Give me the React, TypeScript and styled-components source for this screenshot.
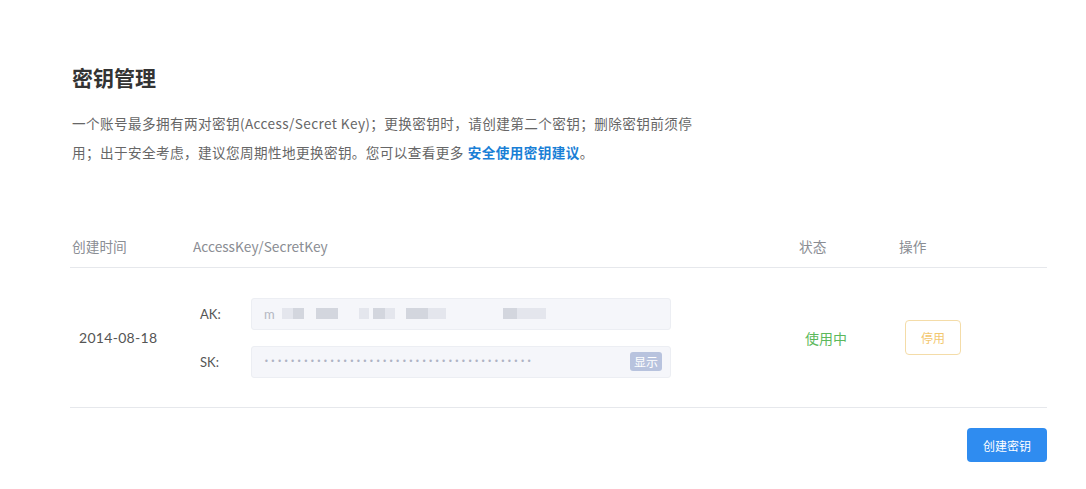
import React from "react";
import styled, { createGlobalStyle } from "styled-components";

const Global = createGlobalStyle`
  html, body { margin: 0; padding: 0; background: #fff; }
  body { font-family: "Noto Sans CJK SC", "Noto Sans", sans-serif; -webkit-font-smoothing: antialiased; }
`;

const Page = styled.div`
  padding: 62px 39px 0 70px;
  display: flex;
  flex-direction: column;
`;

const Title = styled.h1`
  margin: 0 0 0 2px;
  font-size: 21px;
  line-height: 30px;
  font-weight: 700;
  color: #333;
  font-family: "Noto Sans CJK SC", sans-serif;
`;

const Desc = styled.p`
  margin: 17px 0 0 2px;
  max-width: 625px;
  font-size: 13.6px;
  letter-spacing: 0.4px;
  line-height: 29px;
  color: #666;
  font-family: "Noto Sans CJK SC", sans-serif;
`;

const Link = styled.a`
  color: #1a7fd6;
  font-weight: 600;
  text-decoration: none;
  margin-left: 4px;
`;

const Table = styled.div`
  margin-top: 61px;
  display: flex;
  flex-direction: column;
`;

const Row = styled.div<{ $head?: boolean }>`
  display: grid;
  grid-template-columns: 121px 606px 100px 150px;
  align-items: center;
  border-bottom: 1px solid #e6e8ec;
  height: ${(p) => (p.$head ? "39px" : "139px")};
`;

const HeadCell = styled.div`
  font-size: 13.7px;
  color: #8a8d93;
  padding-left: 2px;
  font-family: "Noto Sans CJK SC", sans-serif;
  line-height: 18px;
  padding-bottom: 4px;
`;

const DateCell = styled.div`
  padding-left: 9px;
  font-size: 14px;
  color: #555;
  letter-spacing: 0.3px;
  font-family: "Lato", sans-serif;
`;

const KeyCell = styled.div`
  display: flex;
  flex-direction: column;
  gap: 16px;
`;

const KeyLine = styled.div`
  display: flex;
  align-items: center;
`;

const KeyLabel = styled.span`
  width: 60px;
  padding-left: 9px;
  box-sizing: border-box;
  font-size: 13px;
  color: #555;
  font-family: "Lato", sans-serif;
`;

const KeyBox = styled.div`
  width: 420px;
  height: 32px;
  box-sizing: border-box;
  background: #f5f6fa;
  border: 1px solid #eceef3;
  border-radius: 3px;
  display: flex;
  align-items: center;
  padding: 0 10px 0 12px;
  position: relative;
`;

const MaskFirst = styled.span`
  font-size: 13px;
  color: #b4b8c2;
  margin-right: 7px;
  font-family: "Lato", sans-serif;
`;

const Block = styled.span<{ $dark?: boolean }>`
  display: inline-block;
  height: 11px;
  background: ${(p) => (p.$dark ? "#d3d6de" : "#e4e6ed")};
`;

const Dots = styled.span`
  font-family: "DejaVu Sans", sans-serif;
  font-size: 8px;
  letter-spacing: 1.85px;
  color: #aeb3c4;
  flex: 1;
`;

const ShowBadge = styled.span`
  width: 32px;
  height: 19px;
  border-radius: 3px;
  background: #b8c3de;
  color: #fff;
  font-size: 12px;
  font-family: "Noto Sans CJK SC", sans-serif;
  display: flex;
  align-items: center;
  justify-content: center;
  margin-right: -2px;
`;

const Status = styled.div`
  padding-left: 8px;
  font-size: 14px;
  color: #5cb85c;
  font-family: "Noto Sans CJK SC", sans-serif;
`;

const OpCell = styled.div`
  padding-left: 8px;
`;

const GhostButton = styled.button`
  width: 56px;
  height: 35px;
  border: 1px solid #f4dca8;
  border-radius: 4px;
  background: #fff;
  color: #f3c76e;
  font-size: 12px;
  font-family: "Noto Sans CJK SC", sans-serif;
  cursor: pointer;
`;

const Footer = styled.div`
  display: flex;
  justify-content: flex-end;
  margin-top: 20px;
`;

const PrimaryButton = styled.button`
  width: 80px;
  height: 34px;
  border: none;
  border-radius: 4px;
  background: #2f8cf0;
  color: #fff;
  font-size: 12px;
  font-family: "Noto Sans CJK SC", sans-serif;
  cursor: pointer;
`;

// masked access key blocks: [gap before, width, dark]
const blocks: [number, number, boolean][] = [
  [0, 11, false],
  [0, 11, true],
  [12, 22, true],
  [21, 10, false],
  [4, 12, true],
  [0, 10, false],
  [11, 22, true],
  [0, 10, false],
  [0, 8, false],
  [57, 14, true],
  [0, 16, false],
  [0, 13, false],
];

export default function App() {
  return (
    <>
      <Global />
      <Page>
        <Title>密钥管理</Title>
        <Desc>
          一个账号最多拥有两对密钥(Access/Secret Key)；更换密钥时，请创建第二个密钥；删除密钥前须停用；出于安全考虑，建议您周期性地更换密钥。您可以查看更多
          <Link href="#">安全使用密钥建议</Link>。
        </Desc>
        <Table>
          <Row $head>
            <HeadCell>创建时间</HeadCell>
            <HeadCell>AccessKey/SecretKey</HeadCell>
            <HeadCell>状态</HeadCell>
            <HeadCell>操作</HeadCell>
          </Row>
          <Row>
            <DateCell>2014-08-18</DateCell>
            <KeyCell>
              <KeyLine>
                <KeyLabel>AK:</KeyLabel>
                <KeyBox>
                  <MaskFirst>m</MaskFirst>
                  {blocks.map(([gap, w, dark], i) => (
                    <Block key={i} $dark={dark} style={{ marginLeft: gap, width: w }} />
                  ))}
                </KeyBox>
              </KeyLine>
              <KeyLine>
                <KeyLabel>SK:</KeyLabel>
                <KeyBox>
                  <Dots>{"•".repeat(41)}</Dots>
                  <ShowBadge>显示</ShowBadge>
                </KeyBox>
              </KeyLine>
            </KeyCell>
            <Status>使用中</Status>
            <OpCell>
              <GhostButton>停用</GhostButton>
            </OpCell>
          </Row>
        </Table>
        <Footer>
          <PrimaryButton>创建密钥</PrimaryButton>
        </Footer>
      </Page>
    </>
  );
}
